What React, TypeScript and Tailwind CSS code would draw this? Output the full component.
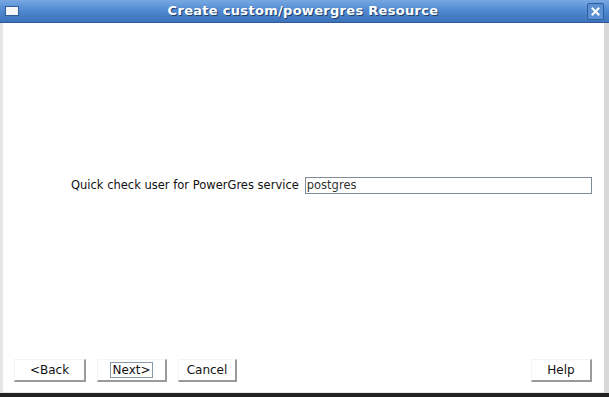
import React from 'react';

const WizardButton: React.FC<{ label: string; focused?: boolean; className?: string }> = ({ label, focused, className = '' }) => (
    <button
        className={`h-[23px] bg-white border-t border-l border-t-[#f4f4f4] border-l-[#f4f4f4] border-r-2 border-b-2 border-r-[#9a9a9a] border-b-[#9a9a9a] text-[12px] text-[#111] flex items-center justify-center ${className}`}
    >
        <span className={focused ? 'border border-[#8a9aaa] px-[1px] leading-[14px]' : 'leading-[14px]'}>{label}</span>
    </button>
);

export default function App() {
    return (
        <div
            className="w-[609px] h-[397px] flex flex-col bg-white overflow-hidden"
            style={{ fontFamily: '"DejaVu Sans", sans-serif' }}
        >
            {/* title bar */}
            <div className="h-[23px] flex items-center px-[5px] bg-gradient-to-b from-[#77a8e2] via-[#4f88cf] to-[#3d73ba] border-b border-[#2d5a96] shrink-0">
                <div className="w-[14px] h-[10px] bg-[#f4f6fa] border border-[#2f5d9c]" />
                <div className="flex-1 text-center text-white font-bold text-[13px] tracking-[0.3px] [text-shadow:1px_1px_0_#1f3f6e]">
                    Create custom/powergres Resource
                </div>
                <div className="w-[17px] h-[17px] rounded-[2px] border border-[#2f5e9e] bg-[#5b91d4] flex items-center justify-center">
                    <svg width="9" height="9" viewBox="0 0 9 9">
                        <path d="M1.5 1.5 L7.5 7.5 M7.5 1.5 L1.5 7.5" stroke="white" strokeWidth="2" strokeLinecap="square" />
                    </svg>
                </div>
            </div>

            {/* body */}
            <div className="flex-1 flex flex-col border-l-[3px] border-l-[#e6e6e6] border-r-[5px] border-r-[#d8d8d8]">
                <div className="flex items-center pl-[68px] pr-[12px] mt-[154px]">
                    <span className="text-[11.5px] text-[#111] mr-[6px] whitespace-nowrap">Quick check user for PowerGres service</span>
                    <div className="flex-1 h-[17px] border border-[#7f8c98] bg-white flex items-center px-[1px] text-[11.5px] text-[#333]">
                        postgres
                    </div>
                </div>
                <div className="flex-1" />
                <div className="flex items-center pl-[11px] pr-[12px] pb-[10px]">
                    <WizardButton label="<Back" className="w-[72px]" />
                    <WizardButton label="Next>" focused className="w-[70px] ml-[11px]" />
                    <WizardButton label="Cancel" className="w-[59px] ml-[11px]" />
                    <div className="flex-1" />
                    <WizardButton label="Help" className="w-[61px]" />
                </div>
                <div className="h-[1px] bg-[#e8e8e8]" />
            </div>
            <div className="h-[4px] bg-[#222] shrink-0" />
        </div>
    );
}
